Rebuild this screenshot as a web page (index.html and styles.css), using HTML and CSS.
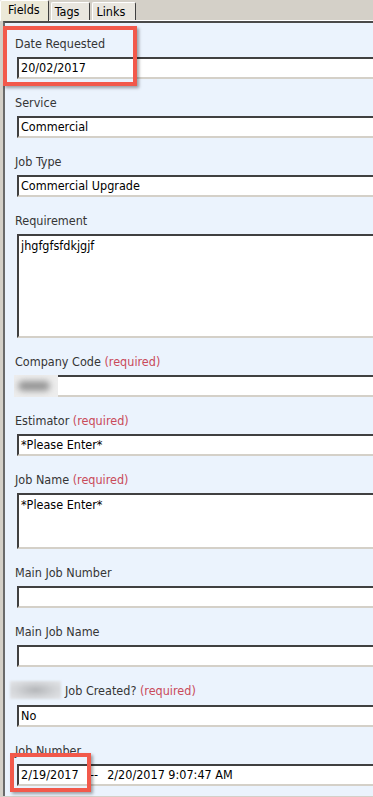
FILE: index.html
```html
<!DOCTYPE html>
<html lang="en">
<head>
    <meta charset="UTF-8">
    <meta name="viewport" content="width=device-width, initial-scale=1.0">
    <title>Job Fields</title>
    <link rel="stylesheet" href="styles.css">
</head>
<body>
    <!-- Tabs -->
    <div class="tabs">
        <div class="tab active">Fields</div>
        <div class="tab">Tags</div>
        <div class="tab">Links</div>
    </div>

    <!-- Fields panel -->
    <div class="panel">
        <div class="field">
            <div class="label">Date Requested</div>
            <div class="input">20/02/2017</div>
        </div>
        <div class="field">
            <div class="label">Service</div>
            <div class="input">Commercial</div>
        </div>
        <div class="field">
            <div class="label">Job Type</div>
            <div class="input">Commercial Upgrade</div>
        </div>
        <div class="field">
            <div class="label">Requirement</div>
            <div class="input textarea tall">jhgfgfsfdkjgjf</div>
        </div>
        <div class="field">
            <div class="label">Company Code <span class="req">(required)</span></div>
            <div class="input"></div>
            <div class="redact"></div>
        </div>
        <div class="field">
            <div class="label">Estimator <span class="req">(required)</span></div>
            <div class="input">*Please Enter*</div>
        </div>
        <div class="field">
            <div class="label">Job Name <span class="req">(required)</span></div>
            <div class="input textarea short">*Please Enter*</div>
        </div>
        <div class="field">
            <div class="label">Main Job Number</div>
            <div class="input"></div>
        </div>
        <div class="field">
            <div class="label">Main Job Name</div>
            <div class="input"></div>
        </div>
        <div class="field">
            <div class="label label-blur"><span class="blur-word"></span>Job Created? <span class="req">(required)</span></div>
            <div class="input">No</div>
        </div>
        <div class="field">
            <div class="label">Job Number</div>
            <div class="input-row">
                <div class="input small">2/19/2017</div>
                <div class="input rest"><span class="dash">--</span>2/20/2017 9:07:47 AM</div>
            </div>
        </div>
    </div>

    <!-- Annotations -->
    <div class="callout callout-date"></div>
    <div class="callout callout-job"></div>
</body>
</html>
```

FILE: styles.css
```css
body {
    margin: 0;
    font-family: Tahoma, "DejaVu Sans Condensed", "DejaVu Sans", sans-serif;
    font-size: 12.5px;
    background-color: #d4d0c8;
    color: #000;
    overflow: hidden;
    position: relative;
    height: 797px;
}

/* Tabs */
.tabs {
    display: flex;
    align-items: flex-end;
    height: 20px;
    border-bottom: 1px solid #fff;
}

.tab {
    height: 17px;
    line-height: 17px;
    padding: 0 10px 0 3px;
    margin-left: 2px;
    background-color: #e9e6df;
    border-top: 1px solid #fff;
    border-left: 1px solid #fff;
    border-right: 1px solid #404040;
    border-radius: 2px 2px 0 0;
}

.tab.active {
    height: 20px;
    line-height: 18px;
    padding: 0 8px 0 7px;
    margin-left: 0;
    margin-bottom: -1px;
    background-color: #ece9d8;
}

/* Panel */
.panel {
    margin-left: 3px;
    border-top: 2px solid #4a4a4a;
    border-left: 2px solid #6a6a6a;
    background-color: #ebf3fd;
    padding: 13px 0 0 10px;
    height: 760px;
}

.field {
    position: relative;
    margin-bottom: 16px;
}

.label {
    line-height: 15px;
    margin-bottom: 6px;
    color: #353535;
}

.req {
    color: #c94a5a;
}

.input {
    margin-left: 2px;
    height: 18px;
    line-height: 18px;
    padding-left: 2px;
    background-color: #fff;
    border-top: 2px solid #404040;
    border-left: 2px solid #404040;
    border-bottom: 2px solid #d4d0c8;
    white-space: nowrap;
    overflow: hidden;
}

.textarea {
    line-height: 15px;
    padding-top: 2px;
}

.textarea.tall {
    height: 98px;
}

.textarea.short {
    height: 50px;
}

.input-row {
    display: flex;
}

.input.small {
    flex-shrink: 0;
    width: 64px;
}

.input.rest {
    flex: 1;
    margin-left: 0;
    border-left: none;
    padding-left: 5px;
}

.dash {
    margin-right: 9px;
}

/* Blurred (redacted) values */
.redact {
    position: absolute;
    left: -1px;
    top: 21px;
    width: 44px;
    height: 22px;
    background-color: #ededed;
    overflow: hidden;
}

.redact::after {
    content: "";
    position: absolute;
    left: 4px;
    top: 6px;
    width: 32px;
    height: 10px;
    background-color: #959595;
    border-radius: 5px;
    filter: blur(3px);
}

.label-blur {
    margin-left: -5px;
}

.blur-word {
    display: inline-block;
    vertical-align: middle;
    width: 51px;
    height: 18px;
    margin-right: 4px;
    margin-top: -3px;
    background: radial-gradient(ellipse at center, #b4b6b9 0%, #d3d5d8 55%, #e4e6e9 100%);
    filter: blur(1px);
}

/* Red annotation boxes */
.callout {
    position: absolute;
    border: 4px solid #f2594b;
    box-shadow: 2px 2px 3px rgba(0, 0, 0, 0.35);
}

.callout-date {
    left: 3px;
    top: 26px;
    width: 126px;
    height: 52px;
}

.callout-job {
    left: 10px;
    top: 753px;
    width: 73px;
    height: 31px;
}
```
